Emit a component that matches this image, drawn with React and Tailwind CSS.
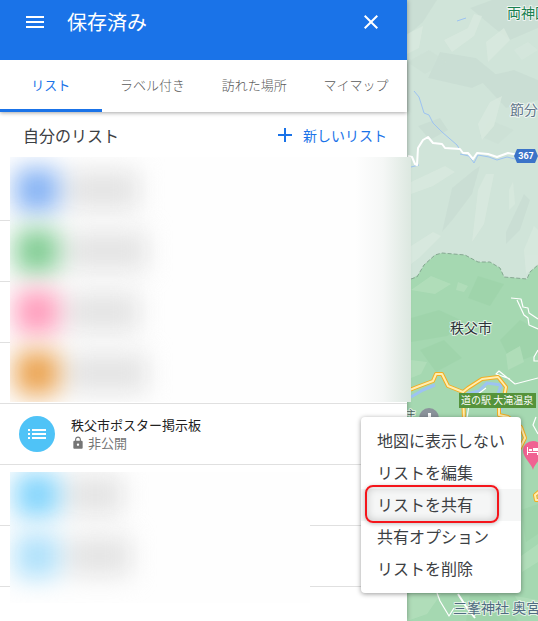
import { MdAdd, MdClose, MdList, MdLock, MdMenu } from "react-icons/md";

const tabs = ["リスト", "ラベル付き", "訪れた場所", "マイマップ"];

const menuItems = [
  "地図に表示しない",
  "リストを編集",
  "リストを共有",
  "共有オプション",
  "リストを削除",
];

const upperRows = [
  { dot: "bg-[#86b3f4]", line: "w-18" },
  { dot: "bg-[#82cd94]", line: "w-20" },
  { dot: "bg-[#ff9dbc]", line: "w-18" },
  { dot: "bg-[#eba452]", line: "w-20" },
];

const lowerRows = [
  { dot: "bg-[#84d5fc]", line: "w-14" },
  { dot: "bg-[#afe1fb]", line: "w-16" },
];

/** Soft placeholder content drawn over rows whose names are hidden. */
function BlurredRows({ rows }) {
  return rows.map((row) => (
    <div
      key={row.dot}
      className="flex h-[61px] items-center gap-2 pl-[5px] blur-[12px]"
    >
      <span className={`size-11 rounded-lg ${row.dot}`} />
      <span className={`h-10 bg-[#e4e4e4] ${row.line}`} />
    </div>
  ));
}

function EmptyRows({ count }) {
  return Array.from({ length: count }, (_, i) => (
    <div key={i} className="h-[61px] border-b border-[#e0e0e0]" />
  ));
}

function ContextMenu() {
  return (
    <div
      role="menu"
      className="absolute top-[13px] left-[361px] z-20 w-40 rounded bg-white py-2 shadow-[0_1px_5px_rgba(0,0,0,0.4)]"
    >
      {menuItems.map((item, i) => (
        <button
          key={item}
          role="menuitem"
          className={`relative block h-8 w-full px-4 pb-0.5 text-left text-[16px] whitespace-nowrap text-[#3c4043] ${
            i === 2 ? "bg-[#f5f6f6]" : ""
          }`}
        >
          {item}
          {i === 2 && (
            <span className="absolute -top-1 right-[22px] -bottom-0.5 left-1 rounded-lg border-2 border-[#f5151b] shadow-[inset_0_0_8px_rgba(0,0,0,0.2),0_1px_4px_rgba(0,0,0,0.25)]" />
          )}
        </button>
      ))}
    </div>
  );
}

function SidePanel() {
  return (
    <aside className="relative z-10 flex w-[407px] shrink-0 flex-col bg-white shadow-[0_0_5px_rgba(0,0,0,0.35)]">
      <header className="relative z-10 bg-[#1a73e8] pb-4 text-white">
        <div className="flex h-11 items-center gap-5 pr-6 pl-[23px]">
          <button aria-label="メニュー">
            <MdMenu size={24} />
          </button>
          <h1 className="flex-1 text-[20px]">保存済み</h1>
          <button aria-label="閉じる">
            <MdClose size={24} />
          </button>
        </div>
      </header>

      <nav className="relative flex h-[52px] shadow-[0_1px_4px_rgba(0,0,0,0.35)]">
        {tabs.map((tab, i) => (
          <button
            key={tab}
            className={`flex-1 border-b-[3px] text-[13px] ${
              i === 0
                ? "border-[#1a73e8] text-[#1a73e8]"
                : "border-transparent font-light text-[#5a5a5a]"
            }`}
          >
            {tab}
          </button>
        ))}
      </nav>

      <div className="flex h-12 items-center justify-between pr-5 pb-0.5 pl-[23px]">
        <h2 className="text-[16px] text-[#3c4043]">自分のリスト</h2>
        <button className="flex items-center gap-1.5 text-[14px] text-[#1a73e8]">
          <MdAdd size={24} />
          新しいリスト
        </button>
      </div>

      <div className="relative">
        <EmptyRows count={4} />
        <div className="absolute -top-[3px] -right-1 bottom-[2px] left-[10px] overflow-hidden bg-[#fefefe] pt-0.5">
          <div className="absolute inset-y-0 right-0 w-14 bg-linear-to-r from-transparent via-[#f5f7f6] to-[#dce8e0]" />
          <BlurredRows rows={upperRows} />
        </div>
      </div>

      <div className="relative flex h-[61px] items-center gap-4 border-b border-[#e0e0e0] pl-[19px]">
        <span className="flex size-9 items-center justify-center rounded-full bg-[#4fc3f7] text-white">
          <MdList size={24} />
        </span>
        <div className="text-[13px] leading-[18px]">
          <p className="text-[#212121]">秩父市ポスター掲示板</p>
          <p className="flex items-center gap-[3px] text-[#757575]">
            <MdLock size={14} />
            非公開
          </p>
        </div>
        <ContextMenu />
      </div>

      <div className="relative">
        <EmptyRows count={2} />
        <div className="absolute top-[7px] -bottom-4 left-[10px] w-[300px] overflow-hidden bg-[#fefefe]">
          <div className="-mt-2">
            <BlurredRows rows={lowerRows} />
          </div>
        </div>
      </div>
    </aside>
  );
}

function RoadMap() {
  return (
    <svg
      className="absolute inset-0 size-full"
      viewBox="407 0 131 621"
      preserveAspectRatio="xMinYMin slice"
      fontFamily="'Noto Sans CJK JP', sans-serif"
    >
      <rect x="407" width="131" height="621" fill="#d0e4d9" />

      {/* hill shading */}
      <g fill="#c9ddd3" opacity=".75">
        <path d="M407 0h30l-14 22-16 14zM470 8l22-8h46v28l-28 12-16-12zM440 52l36 6 22 18-26 12-44-10zM478 78l36-8 24 10v20l-32 8zM452 188l22-18 6-4-8 28-18 24-12 14zM506 232l18-38 6 6-10 30-14 14zM418 126l22-8 8 12-18 10z" />
        <path d="M407 62l22-12 18 12-22 12zM490 120l24 10-16 14-18-8z" opacity=".6" />
      </g>
      <g fill="#d9eadf" opacity=".75">
        <path d="M407 34l16-8-4 22-12 6zM444 40l24-12 6-14 8 2-8 20-22 16zM486 42l18-14 6 12-22 22zM478 190l8-16h8l-10 50-12 18zM411 182l34-16 10 6-22 14-22 8zM411 246l22-14 8 4-22 22-8 6zM524 250l10-24 4 4v34l-12 10zM478 124l12-22 12-6-8 30-12 14zM509 190l4-8 2 22-6 6z" />
        <path d="M514 50l14-8 10 8-16 10z" opacity=".6" />
      </g>

      {/* park area */}
      <path
        d="M407 285L411 279 418 275 424 265 435 255 442 253 465 255 478 262 490 262 500 268 504 277 527 279 530 272 538 265V621H407z"
        fill="#a5d8b1"
      />
      <g fill="#9dd3aa" opacity=".8">
        <path d="M411 318l28-8 26 12-18 14-36 6zM478 276l26 8-14 22-22-8zM500 340l20-20 18 10v24l-26 10zM420 350l24-10 18 18-26 14zM521 510l17-6v30l-12 8zM470 595l28 0 20 26h-52z" />
      </g>
      <g fill="#b3debb" opacity=".8">
        <path d="M411 290l20-14 20 8-16 10zM506 354l14-8 4 16-16 8zM411 360l16 2-6 12-10 4zM458 282l10 4-4 6-8-2zM407 594l34 0-14 20-20 7zM521 556l17-12v18l-16 10zM515 596l23 4v12l-18-6z" />
      </g>
      <path
        d="M411 279L417 277 424 265 435 255 442 253 465 255 478 262 490 262 500 268 504 277 527 279 530 272 538 265"
        fill="none"
        stroke="#86a892"
        strokeDasharray="4 2"
      />

      {/* rivers */}
      <g fill="none" stroke="#9dc3f2" strokeWidth="1">
        <path d="M414 91L419 97 424 113 429 115 433 123 442 132 457 145 460 150M457 21l9-3M411 167l8-2M460 154l9 2 5 7 4-8 11 2 8 3 10-3 8 2" />
        <path d="M411 397l12-7 12-5M467 394l12-3 8-8 14 2-4 12M503 400l-3 12M522 440l-3 14" strokeWidth="3" />
      </g>

      {/* local roads */}
      <g fill="none" stroke="#fff" strokeLinejoin="round">
        <path
          d="M408 156L412 157 415 164 417 165 418 148 423 140 428 137 433 143 442 144 445 148 460 149 463 153 468 153 473 159 477 153 488 154 497 157 508 153 518 155"
          strokeWidth="2"
        />
        <path d="M511 298L521 299 523 307 528 308 529 313 538 319M517 300L524 315 528 318 529 325 538 329M538 350L534 357 534 361 538 361M510 379L496 374 499 371 515 384 538 378M467 418l2-13M486 388l-8 6M536 417l-3 8 5 9M437 593l3 8 9 15 5-8" strokeWidth="1.2" />
        <path d="M458 594l9 14 8 10" strokeWidth="2" />
      </g>

      {/* highways */}
      <g fill="none" strokeLinejoin="round">
        {[
          ["#f3ad22", 4],
          ["#ffeeb0", 2],
        ].map(([stroke, width]) => (
          <path
            key={stroke}
            d="M407 391L417 387 433 381 436 374 442 374 448 386 463 392 468 388 482 379 498 377 506 387 504 397 499 405 499 415 508 417 521 427 525 438 519 450M463 392L464 420M540 491l-5 4 1 5h4"
            stroke={stroke}
            strokeWidth={width}
          />
        ))}
      </g>

      <path d="M517 149h18l3 7-3 7h-18l-3-7z" fill="#3b73c8" />
      <text x="526" y="159" textAnchor="middle" fontSize="9" fontWeight="700" fill="#fff" fontFamily="Roboto, sans-serif">
        367
      </text>

      <circle cx="429" cy="418" r="10" fill="#8b939b" />
      <path d="M428 413h3v4h-3z" fill="#fff" />

      <path d="M533 470c-1-6-10-12-10-20a10 9 0 0 1 20 0c0 8-9 14-10 20z" fill="#f06292" />
      <path d="M527 447h1v5h10v3h-1v-2h-9v2h-1zM529 449h3v2h-3zM533 448h5v3h-5z" fill="#fff" />

      <rect x="459" y="393" width="77" height="15" fill="#55933b" />
      <text x="461" y="404" fontSize="10" fill="#fff">
        道の駅 大滝温泉
      </text>

      <g fontSize="14" stroke="#fff" strokeWidth="2" strokeOpacity=".7" paintOrder="stroke" strokeLinejoin="round">
        <text x="507" y="18" fill="#188050">両神国</text>
        <text x="510" y="115" fill="#5e7488">節分</text>
        <text x="450" y="333" fill="#2e3338">秩父市</text>
        <text x="453" y="613" fill="#4f6b80">三峯神社 奥宮</text>
        <text x="406" y="418" fontSize="10" fill="#4d6360">主</text>
      </g>
    </svg>
  );
}

export default function App() {
  return (
    <main className="flex min-h-screen overflow-hidden bg-white font-['Noto_Sans_CJK_JP',sans-serif]">
      <SidePanel />
      <section aria-label="地図" className="relative flex-1">
        <RoadMap />
      </section>
    </main>
  );
}
